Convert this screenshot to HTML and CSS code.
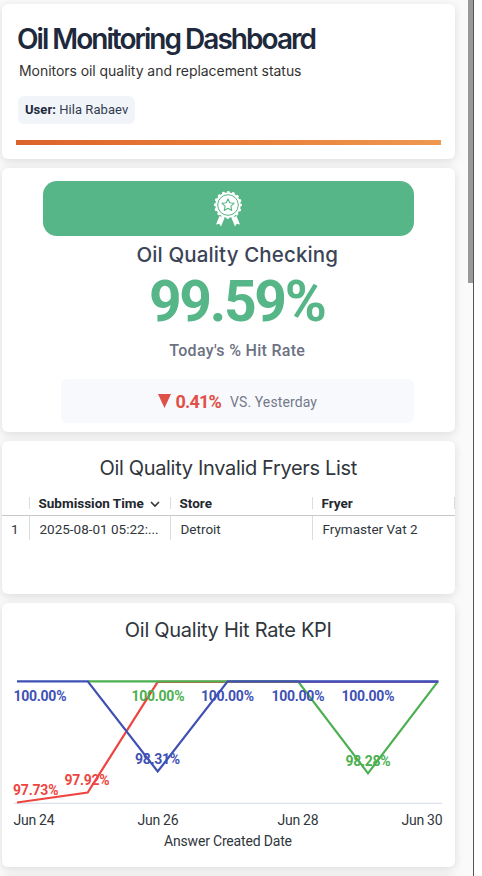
FILE: index.html
```html
<!DOCTYPE html>
<html lang="en">
<head>
<meta charset="utf-8">
<title>Oil Monitoring Dashboard</title>
<link rel="stylesheet" href="styles.css">
</head>
<body>
<div class="viewport">
  <main class="page">
    <header class="card header">
      <h1 class="title"><span>Oil Monitoring Dashboard</span></h1>
      <p class="subtitle">Monitors oil quality and replacement status</p>
      <div class="user"><b>User:</b> Hila Rabaev</div>
      <div class="rule"></div>
    </header>

    <section class="card quality">
      <div class="banner">
        <svg class="award" viewBox="0 0 30 38" width="30" height="38">
          <path fill="#fff" d="M6.500 26 3 34.500l3.200-.8L8 36.500 11.500 28zM23.500 26 27 34.500l-3.200-.8L22 36.500 18.500 28z"/>
          <circle cx="15" cy="15" r="12.600" fill="#fff"/>
          <circle cx="15" cy="15" r="12.600" fill="none" stroke="#fff" stroke-width="3" stroke-linecap="round" stroke-dasharray="0.100 4.848"/>
          <circle cx="15" cy="15" r="10.300" fill="none" stroke="#56b687" stroke-width="1"/>
          <path fill="none" stroke="#56b687" stroke-width="1.100" stroke-linejoin="round" d="m15 8.900 1.800 3.900 4.200.5-3.100 2.900.8 4.200-3.700-2.100-3.700 2.100.8-4.200L9 13.300l4.200-.5z"/>
        </svg>
      </div>
      <h2 class="quality-title">Oil Quality Checking</h2>
      <div class="score">99.59%</div>
      <div class="score-label">Today's % Hit Rate</div>
      <div class="compare">
        <svg width="13" height="14" viewBox="0 0 13 14"><path fill="#df5048" d="M0 0h13L6.500 14z"/></svg>
        <b class="delta">0.41%</b>
        <span class="versus">VS. Yesterday</span>
      </div>
    </section>

    <section class="card list">
      <h2 class="card-title list-title">Oil Quality Invalid Fryers List</h2>
      <div class="row head">
        <span></span>
        <span class="cell">Submission Time
          <svg class="chevron" width="10" height="7" viewBox="0 0 10 7"><path d="m1 1 4 4 4-4" fill="none" stroke="#30363c" stroke-width="1.600"/></svg>
        </span>
        <span class="cell">Store</span>
        <span class="cell">Fryer</span>
        <span class="cell"></span>
      </div>
      <div class="row body">
        <span class="index">1</span>
        <span class="cell">2025-08-01 05:22:...</span>
        <span class="cell">Detroit</span>
        <span class="cell">Frymaster Vat 2</span>
      </div>
    </section>

    <section class="card kpi">
      <h2 class="card-title kpi-title">Oil Quality Hit Rate KPI</h2>
      <svg class="chart" width="452" height="204" viewBox="2 650 452 204">
        <path d="M14 803.300H442" stroke="#d3daea" stroke-width="1"/>
        <g fill="none" stroke-width="2.200">
          <path stroke="#ee4540" d="M17 802.500 87.700 792.500 157.700 681.800H298"/>
          <path stroke="#4caf50" d="M87.700 681.300H298L368 773.300 438 681.300"/>
          <path stroke="#8d55b5" d="M298 681.900H438"/>
          <path stroke="#3f51b5" d="M17 681.300H87.700L157.700 771.500 227.700 681.300H438.500"/>
        </g>
        <g class="values">
          <g class="blue">
            <text x="13.500" y="700.500" textLength="53">100.00%</text>
            <text x="201" y="700.500" textLength="53">100.00%</text>
            <text x="271.500" y="700.500" textLength="53">100.00%</text>
            <text x="341.500" y="700.500" textLength="53">100.00%</text>
            <text x="135" y="764" textLength="45">98.31%</text>
          </g>
          <g class="green">
            <text x="131.500" y="700.500" textLength="53">100.00%</text>
            <text x="345.500" y="765.500" textLength="45">98.28%</text>
          </g>
          <g class="red">
            <text x="13" y="795" textLength="45.500">97.73%</text>
            <text x="64.500" y="785" textLength="45">97.92%</text>
          </g>
        </g>
        <g class="axis">
          <text x="13.500" y="824.500" textLength="41">Jun 24</text>
          <text x="137.500" y="824.500" textLength="41">Jun 26</text>
          <text x="277.500" y="824.500" textLength="41">Jun 28</text>
          <text x="401.500" y="824.500" textLength="41">Jun 30</text>
          <text x="164" y="846" textLength="128">Answer Created Date</text>
        </g>
      </svg>
    </section>
    <section class="card next"></section>
  </main>
  <div class="scroll"><div class="thumb"></div></div>
</div>
</body>
</html>
```
FILE: styles.css
```css
* { box-sizing: border-box; }
body { margin: 0; background: #fff; font-family: Roboto, "Liberation Sans", sans-serif; color: #30363c; }
h1, h2, p { margin: 0; }
.viewport { display: flex; width: 474px; height: 876px; overflow: hidden; border-right: 1.500px solid #555; background: #fafafa; }
.page { display: flex; flex-direction: column; gap: 9px; width: 468px; flex: none; padding: 4px 13.500px 0 2px; }
.scroll { width: 5px; flex: none; }
.thumb { height: 283px; background: #999; }
.card { flex: none; background: #fff; border-radius: 6px; box-shadow: 0 2px 10px rgba(0,0,0,.13); overflow: hidden; }

.header { height: 155px; padding: 18px 14px 0; }
.title { height: 34px; padding-left: 1px; font: 600 28px/34px Inter, sans-serif; letter-spacing: -1.970px; color: #20293c; white-space: nowrap; }
.subtitle { height: 30px; padding-left: 3px; font: 400 14px/30px Inter, sans-serif; letter-spacing: -.05px; color: #333; white-space: nowrap; }
.user { margin: 10px 0 0 2px; width: 117px; height: 28px; padding-left: 7px; border-radius: 6px; background: #f1f5fa; font-size: 13px; line-height: 28px; letter-spacing: .05px; color: #333b4e; white-space: nowrap; }
.user b { color: #20293c; }
.rule { height: 5px; margin-top: 16px; background: linear-gradient(90deg, #dc622b, #e97c36 50%, #ee9850); }

.quality { height: 264px; display: flex; flex-direction: column; align-items: center; padding-top: 13px; }
.banner { width: 371px; height: 55px; border-radius: 14px; background: #56b687; display: flex; justify-content: center; padding-top: 9px; }
.quality-title { height: 38px; font: 500 20.500px/38px Inter, sans-serif; letter-spacing: .13px; color: #3c4558; padding-left: 18px; }
.score { height: 54px; font-size: 57px; line-height: 55px; font-weight: 700; letter-spacing: -2.300px; color: #56b687; padding-left: 17px; }
.score-label { height: 42px; font-size: 16px; line-height: 45px; font-weight: 500; letter-spacing: .3px; color: #6c7282; padding-left: 18px; }
.compare { width: 353px; height: 44px; margin: 9px 0 0 18px; border-radius: 6px; background: #f8f9fc; display: flex; align-items: center; justify-content: center; }
.delta { margin-left: 5px; font-size: 18px; letter-spacing: -.8px; color: #df5048; }
.versus { margin-left: 9px; font-size: 14px; letter-spacing: .1px; color: #73798a; padding-top: 2px; }

.card-title { text-align: center; font: 400 20px/30px Inter, sans-serif; }
.list { height: 153px; }
.list-title { height: 47px; padding-top: 12px; letter-spacing: -.33px; }
.row { display: grid; grid-template-columns: 26.500px 141px 142px 142px 1px; white-space: nowrap; overflow: hidden; }
.head { height: 28px; padding: 9px 0 7px; border-bottom: 1.500px solid #c5c7ca; font-size: 13.500px; line-height: 12px; font-weight: 700; color: #23282e; }
.body { height: 24px; font-size: 13.500px; line-height: 26px; }
.cell { border-left: 1px solid #dadce0; padding-left: 9px; }
.body .cell { padding-left: 10px; }
.chevron { margin-left: 3px; }
.index { padding-left: 9px; }
.kpi { height: 264px; }
.kpi-title { height: 47px; padding-top: 12px; letter-spacing: -.28px; }
.chart { display: block; }
.values { font-size: 14px; font-weight: 700; }
.blue { fill: #3f51b5; }
.green { fill: #4caf50; }
.red { fill: #ee4540; }
.axis { font-size: 14px; fill: #30363c; }
.next { height: 20px; }
```
